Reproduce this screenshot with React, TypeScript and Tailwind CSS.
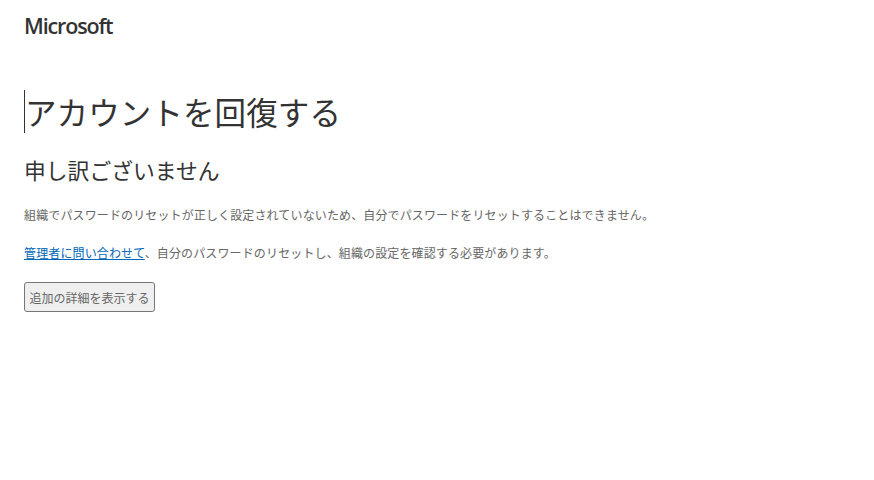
const cjk = "font-['Open_Sans','Noto_Sans_CJK_JP',sans-serif]";

export default function App() {
  return (
    <div className={`min-h-[480px] w-[874px] bg-white pl-6 ${cjk}`}>
      <div className="pt-[12px] font-['Open_Sans',sans-serif] text-[21.5px] leading-[28px] font-semibold tracking-[-1.15px] text-[#333]">
        Microsoft
      </div>

      <h1 className="mt-[50px] h-[43px] border-l border-[#333] text-[31.5px] leading-[45px] font-normal tracking-[0.1px] text-[#333]">
        アカウントを回復する
      </h1>

      <h2 className="mt-[22px] text-[21.8px] leading-[32px] font-normal text-[#333]">
        申し訳ございません
      </h2>

      <p className="mt-[20px] text-[12px] leading-[18px] tracking-[0.13px] text-[#666]">
        組織でパスワードのリセットが正しく設定されていないため、自分でパスワードをリセットすることはできません。
      </p>

      <p className="mt-[20px] text-[12px] leading-[18px] tracking-[0.13px] text-[#666]">
        <a href="#" className="text-[#0067b8] underline">
          管理者に問い合わせて
        </a>
        、自分のパスワードのリセットし、組織の設定を確認する必要があります。
      </p>

      <button className="mt-[19px] h-[30px] w-[131px] rounded-[3px] border border-[#767676] bg-[#efefef] pt-[3px] text-center text-[12px] leading-[25px] text-[#666]">
        追加の詳細を表示する
      </button>
    </div>
  );
}
